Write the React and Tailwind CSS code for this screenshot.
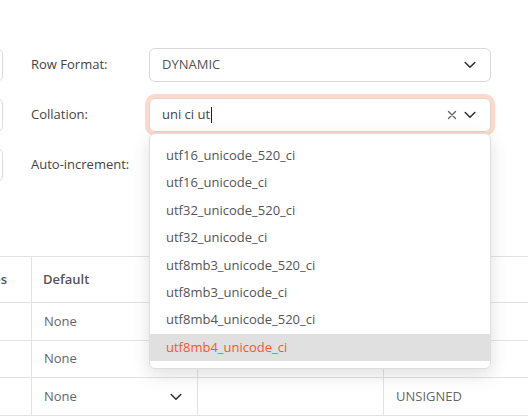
import React from "react";

const Chevron = ({ className = "" }) => (
  <svg width="12" height="8" viewBox="0 0 12 8" className={className} fill="none">
    <polyline points="1.2,1.5 6,6.2 10.8,1.5" stroke="#333" strokeWidth="1.6" strokeLinecap="round" strokeLinejoin="round" />
  </svg>
);

const Clear = () => (
  <svg width="10" height="10" viewBox="0 0 10 10" fill="none">
    <path d="M1.5 1.5 L8.5 8.5 M8.5 1.5 L1.5 8.5" stroke="#5f6672" strokeWidth="1.4" strokeLinecap="round" />
  </svg>
);

const items = [
  "utf16_unicode_520_ci",
  "utf16_unicode_ci",
  "utf32_unicode_520_ci",
  "utf32_unicode_ci",
  "utf8mb3_unicode_520_ci",
  "utf8mb3_unicode_ci",
  "utf8mb4_unicode_520_ci",
  "utf8mb4_unicode_ci",
];

export default function App() {
  return (
    <div
      className="w-[528px] h-[416px] overflow-hidden bg-white relative text-[13px] text-[#4a4a4a]"
      style={{ fontFamily: '"Open Sans", "Noto Sans", sans-serif' }}
    >
      {/* Form area */}
      <div className="flex pt-[48px]">
        <div className="-ml-[200px] w-[203px] flex flex-col gap-[16px] shrink-0">
          <div className="h-[34px] border border-[#dcdcdc] rounded-[6px] bg-white" />
          <div className="h-[34px] border border-[#dcdcdc] rounded-[6px] bg-white" />
          <div className="h-[34px] border border-[#dcdcdc] rounded-[6px] bg-white" />
        </div>
        <div className="ml-[28px] flex flex-col gap-[16px]">
          <div className="flex items-center h-[34px]">
            <div className="w-[118px] text-[#444]">Row Format:</div>
            <div className="w-[342px] h-[34px] border border-[#d9d9d9] rounded-[6px] flex items-center pl-[12px] pr-[14px] text-[#555]">
              <span className="flex-1">DYNAMIC</span>
              <Chevron />
            </div>
          </div>
          <div className="flex items-center h-[34px]">
            <div className="w-[118px] text-[#444]">Collation:</div>
            <div className="relative w-[342px] h-[34px] border border-[#e6d2ca] rounded-[6px] flex items-center pl-[12px] pr-[14px] text-[#444] shadow-[0_0_0_4px_#fdd9cb]">
              <span className="flex-1 flex items-center">
                uni ci ut<span className="inline-block w-[1px] h-[16px] bg-[#222] ml-[1px]" />
              </span>
              <span className="mr-[7px] flex items-center"><Clear /></span>
              <Chevron />
              {/* Dropdown */}
              <div className="absolute left-[-1px] top-[34px] w-[342px] h-[236px] bg-white border border-[#dedede] rounded-[6px] shadow-[0_6px_18px_rgba(0,0,0,0.13)] py-[8px] z-10">
                {items.map((t, i) => (
                  <div
                    key={t}
                    className={
                      i === items.length - 1
                        ? "h-[27.4px] flex items-center pl-[16px] bg-[#e0e0e0] text-[#f25c2a]"
                        : "h-[27.4px] flex items-center pl-[16px] text-[#555]"
                    }
                  >
                    {t}
                  </div>
                ))}
              </div>
            </div>
          </div>
          <div className="flex items-center h-[34px]">
            <div className="w-[118px] text-[#444]">Auto-increment:</div>
            <div className="w-[342px] h-[34px] border border-[#d9d9d9] rounded-[6px]" />
          </div>
        </div>
      </div>

      {/* Table */}
      <div className="absolute left-0 top-[256px] w-[528px] border-t border-[#e3e3e3]">
        <div className="flex h-[46px] border-b border-[#e3e3e3]">
          <div className="w-[32px] shrink-0 overflow-hidden flex items-center justify-end border-r border-[#e3e3e3] font-semibold text-[#555]">
            <span className="whitespace-nowrap pr-[24px]">Attributes</span>
          </div>
          <div className="w-[166px] shrink-0 flex items-center pl-[11px] border-r border-[#e3e3e3] font-semibold text-[#555]">Default</div>
          <div className="w-[186px] shrink-0 border-r border-[#e3e3e3]" />
          <div className="flex-1" />
        </div>
        {[0, 1, 2].map((r) => (
          <div key={r} className="flex h-[37.7px] border-b border-[#e3e3e3]">
            <div className="w-[32px] shrink-0 border-r border-[#e3e3e3]" />
            <div className="w-[166px] shrink-0 flex items-center pl-[12px] pr-[15px] border-r border-[#e3e3e3] text-[#666]">
              <span className="flex-1">None</span>
              {r === 2 && <Chevron />}
            </div>
            <div className="w-[186px] shrink-0 border-r border-[#e3e3e3]" />
            <div className="flex-1 flex items-center pl-[12px] text-[#666]">{r === 2 ? "UNSIGNED" : ""}</div>
          </div>
        ))}
      </div>
    </div>
  );
}
